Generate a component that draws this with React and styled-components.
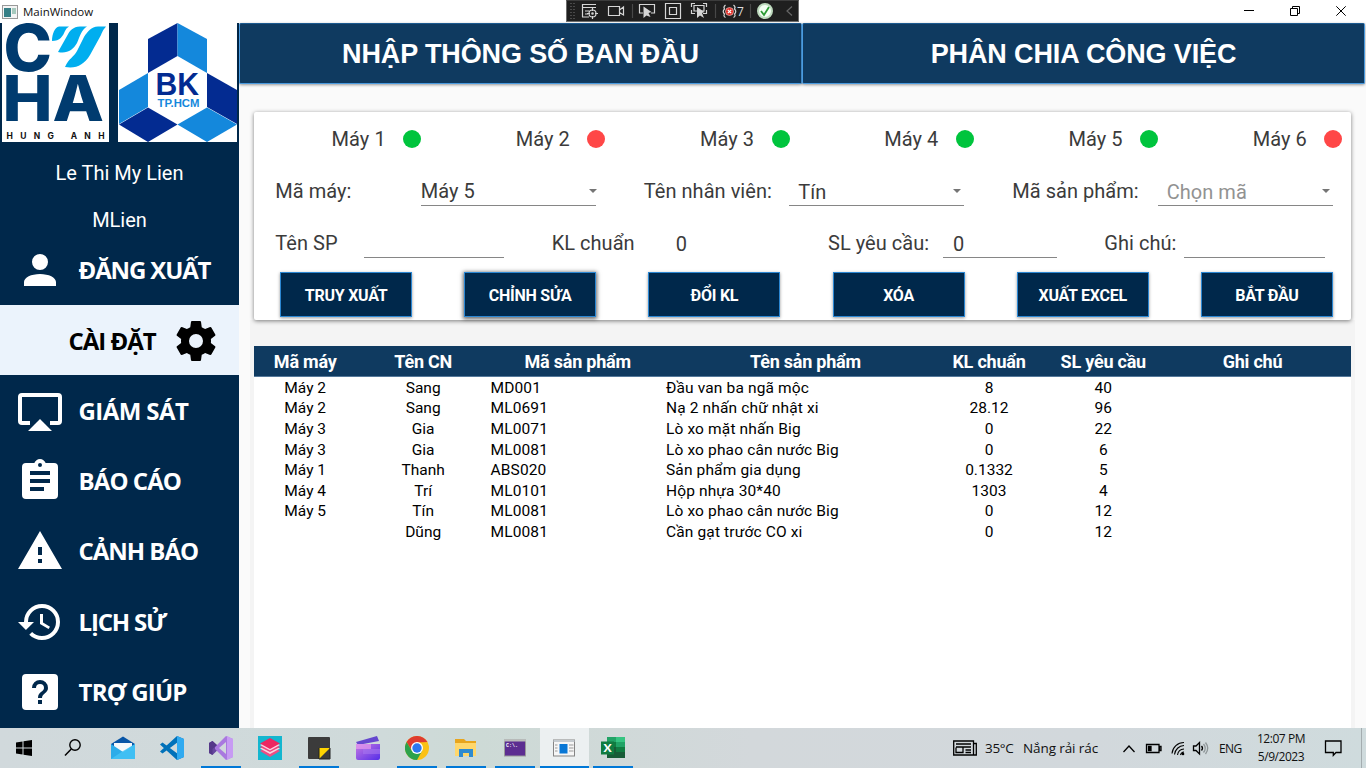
import React from "react";
import styled, { createGlobalStyle } from "styled-components";

const Global = createGlobalStyle`
  * { box-sizing: border-box; }
  body { margin: 0; overflow: hidden; background: #fff; }
`;

const ui = '"Open Sans", "Noto Sans", sans-serif';

const Screen = styled.div`
  width: 1366px;
  height: 768px;
  display: flex;
  flex-direction: column;
  font-family: Roboto, sans-serif;
  overflow: hidden;
  position: relative;
`;

/* ---------- title bar ---------- */
const TitleBar = styled.header`
  height: 23px;
  flex: none;
  display: flex;
  align-items: center;
  padding: 0 2px;
  background: #fff;
`;
const WindowTitle = styled.span`
  font: 11.5px/22px ${ui};
  color: #111;
  margin-left: 5px;
  flex: 1;
`;
const WindowControls = styled.div`
  display: flex;
  height: 20px;
  align-items: center;
  margin-bottom: 2px;
`;
const WindowButton = styled.div`
  width: 46px;
  display: flex;
  justify-content: center;
`;
const DebugBar = styled.div`
  position: absolute;
  left: 566px;
  top: 0;
  width: 233px;
  height: 22px;
  background: #1f1f1f;
  border: 1px solid #6c6c6c;
  border-top-color: #3c3c3c;
`;

/* ---------- sidebar ---------- */
const Body = styled.div`
  flex: 1;
  min-height: 0;
  display: flex;
`;
const Sidebar = styled.aside`
  width: 239px;
  flex: none;
  background: #00284b;
  display: flex;
  flex-direction: column;
`;
const Logos = styled.div`
  height: 119px;
  padding-left: 2px;
  display: flex;
  gap: 9px;
  svg { overflow: visible; }
`;
const UserLine = styled.div`
  height: 47px;
  margin-top: ${(p) => p.$top || 0}px;
  display: flex;
  align-items: center;
  justify-content: center;
  font-size: 20px;
  color: #fff;
`;
const NavItem = styled.div`
  height: ${(p) => (p.$active ? 70 : 70.4)}px;
  flex: none;
  display: flex;
  align-items: center;
  padding-top: 1px;
  padding-left: ${(p) => (p.$active ? 68.5 : 16)}px;
  gap: ${(p) => (p.$active ? 16 : 14.6)}px;
  color: ${(p) => (p.$active ? "#000" : "#fff")};
  background: ${(p) => (p.$active ? "#ebf3fc" : "transparent")};
  svg { flex: none; }
`;
const LogoutItem = styled(NavItem)`
  height: 62px;
  padding-bottom: 9px;
`;
const NavLabel = styled.span`
  font: 700 24px/34px ${ui};
  letter-spacing: ${(p) => p.$ls}px;
  white-space: nowrap;
`;

/* ---------- main ---------- */
const Main = styled.main`
  flex: 1;
  min-width: 0;
  background: #fafafa;
  display: flex;
  flex-direction: column;
`;
const Tabs = styled.div`
  display: flex;
  height: 61px;
  flex: none;
`;
const Tab = styled.div`
  width: 563px;
  flex: none;
  height: 61px;
  background: #0f3a60;
  border: 1px solid #4a9be0;
  border-top-color: #1c5a90;
  border-radius: 2px;
  box-shadow: 0 1px 3px rgba(0, 0, 0, 0.4);
  display: flex;
  align-items: center;
  justify-content: center;
  color: #fff;
  font: 700 27px/40px "Liberation Sans", Arial, sans-serif;
  letter-spacing: -0.12px;
`;
const Panel = styled.section`
  margin: 28px 0 0 15px;
  width: 1096.5px;
  height: 208px;
  flex: none;
  padding-top: 1px;
  background: #fff;
  border-radius: 2px;
  box-shadow: 0 1px 4px rgba(0, 0, 0, 0.5);
  position: relative;
`;
const FormRow = styled.div`
  width: 1105.4px;
  height: 52px;
  display: grid;
  grid-template-columns: repeat(${(p) => p.$cols}, 1fr);
  color: #3b3b3b;
  font-size: 20px;
  letter-spacing: 0.04px;
`;
const ButtonRow = styled(FormRow)`
  width: 1105px;
`;
const Machine = styled.div`
  display: flex;
  align-items: center;
  padding-left: 77.6px;
`;
const MachineName = styled.span`
  width: 71.5px;
  white-space: nowrap;
`;
const Dot = styled.i`
  width: 18px;
  height: 18px;
  border-radius: 50%;
  background: ${(p) => (p.$on ? "#00c43d" : "#ff4747")};
`;
const Field = styled.div`
  display: flex;
  align-items: center;
  padding-left: 21.3px;
`;
const Label = styled.label`
  width: ${(p) => p.$w}px;
  flex: none;
  white-space: nowrap;
`;
const Input = styled.div`
  width: ${(p) => p.$w}px;
  height: 30px;
  flex: none;
  padding-left: ${(p) => p.$pad || 0}px;
  padding-right: 3px;
  display: flex;
  align-items: center;
  justify-content: space-between;
  line-height: 28px;
  padding-top: ${(p) => (p.$pad ? 2 : 0)}px;
  border-bottom: ${(p) => (p.$plain ? "none" : "1px solid #868686")};
  color: ${(p) => (p.$muted ? "#929292" : "#3b3b3b")};
`;
const Caret = styled.i`
  border: 4px solid transparent;
  border-top-color: #757575;
  border-bottom: 0;
  margin-right: ${(p) => (p.$up ? 0 : -4)}px;
  margin-top: ${(p) => (p.$up ? -2 : 0)}px;
`;
const ButtonCell = styled.div`
  display: flex;
  justify-content: center;
  padding-top: 3px;
`;
const Button = styled.button`
  width: 132px;
  height: 45px;
  padding: 2px 0 0;
  background: #00284b;
  border: 1px solid #2b87d3;
  box-shadow: 0 1px ${(p) => (p.$focus ? "4px 1px" : "3px")} rgba(0, 0, 0, ${(p) => (p.$focus ? 0.6 : 0.4)});
  color: #fff;
  font: 700 16px Roboto, sans-serif;
  letter-spacing: -0.25px;
`;
const TableArea = styled.section`
  flex: 1;
  margin: 0 11px 0 11px;
  padding: 26px 4px 0;
  background: #f4f4f4;
  display: flex;
`;
const Table = styled.div`
  width: 1097px;
  background: #fff;
`;
const Row = styled.div`
  display: grid;
  grid-template-columns: 102.4px 133.6px 175.5px 280px 87px 141.5px 157px;
  height: 20.6px;
  line-height: 20.6px;
  font-size: 15.5px;
  color: #000;
  text-align: center;
  white-space: nowrap;
`;
const Rows = styled.div`
  padding-top: 0.8px;
`;
const HeadRow = styled(Row)`
  height: 31px;
  line-height: 32px;
  font-size: 18px;
  font-weight: 700;
  background: #0f3a60;
  border-bottom: 1px solid #54789a;
  color: #fff;
  letter-spacing: -0.22px;
`;
const Cell = styled.span`
  text-align: ${(p) => (p.$left ? "left" : "center")};
  padding-left: ${(p) => (p.$left ? 0.5 : 0)}px;
  letter-spacing: ${(p) => (p.$left ? "0.14px" : "inherit")};
`;

/* ---------- taskbar ---------- */
const Taskbar = styled.footer`
  height: 40px;
  flex: none;
  display: flex;
  background: linear-gradient(90deg, #d1d9dc 0, #cfdada 28%, #cddad6 35%, #d3d8db 55%, #d2d8dc 80%, #cfdbdd 100%);
  color: #111;
  font-family: ${ui};
`;
const TaskButton = styled.div`
  width: ${(p) => p.$w || 49}px;
  height: 40px;
  padding-right: 1px;
  display: flex;
  align-items: center;
  justify-content: center;
  background: ${(p) => (p.$active ? "#ecf0f1" : "transparent")};
  box-shadow: ${(p) => (p.$active ? "inset 0 -2px #0078d7" : "none")};
  position: relative;
  &::after {
    content: "";
    display: ${(p) => (p.$open && !p.$active ? "block" : "none")};
    position: absolute;
    bottom: 0;
    left: 4px;
    right: 5px;
    height: 2px;
    background: #0078d7;
  }
`;
const Tray = styled.div`
  margin-left: auto;
  display: flex;
  align-items: center;
  padding-right: 4px;
`;
const TrayText = styled.span`
  font-size: ${(p) => p.$size || 12}px;
  width: ${(p) => p.$w}px;
  letter-spacing: ${(p) => p.$ls || "0"};
  white-space: nowrap;
`;
const Clock = styled.div`
  width: 62px;
  font-size: 12px;
  line-height: 18px;
  text-align: center;
  letter-spacing: -0.45px;
  white-space: nowrap;
`;
const ShowDesktop = styled.i`
  width: 1px;
  height: 40px;
  background: #a4adb0;
`;

const paths = {
  account: "M12,4A4,4 0 0,1 16,8A4,4 0 0,1 12,12A4,4 0 0,1 8,8A4,4 0 0,1 12,4M12,14C16.42,14 20,15.79 20,18V20H4V18C4,15.79 7.58,14 12,14Z",
  cog: "M12,15.5A3.5,3.5 0 0,1 8.5,12A3.5,3.5 0 0,1 12,8.5A3.5,3.5 0 0,1 15.5,12A3.5,3.5 0 0,1 12,15.5M19.43,12.97C19.47,12.65 19.5,12.33 19.5,12C19.5,11.67 19.47,11.34 19.43,11L21.54,9.37C21.73,9.22 21.78,8.95 21.66,8.73L19.66,5.27C19.54,5.05 19.27,4.96 19.05,5.05L16.56,6.05C16.04,5.66 15.5,5.32 14.87,5.07L14.5,2.42C14.46,2.18 14.25,2 14,2H10C9.75,2 9.54,2.18 9.5,2.42L9.13,5.07C8.5,5.32 7.96,5.66 7.44,6.05L4.95,5.05C4.73,4.96 4.46,5.05 4.34,5.27L2.34,8.73C2.21,8.95 2.27,9.22 2.46,9.37L4.57,11C4.53,11.34 4.5,11.67 4.5,12C4.5,12.33 4.53,12.65 4.57,12.97L2.46,14.63C2.27,14.78 2.21,15.05 2.34,15.27L4.34,18.73C4.46,18.95 4.73,19.03 4.95,18.95L7.44,17.94C7.96,18.34 8.5,18.68 9.13,18.93L9.5,21.58C9.54,21.82 9.75,22 10,22H14C14.25,22 14.46,21.82 14.5,21.58L14.87,18.93C15.5,18.67 16.04,18.34 16.56,17.94L19.05,18.95C19.27,19.03 19.54,18.95 19.66,18.73L21.66,15.27C21.78,15.05 21.73,14.78 21.54,14.63L19.43,12.97Z",
  airplay: "M6,22H18L12,16M21,3H3A2,2 0 0,0 1,5V17A2,2 0 0,0 3,19H7V17H3V5H21V17H17V19H21A2,2 0 0,0 23,17V5A2,2 0 0,0 21,3Z",
  clipboard: "M17,9H7V7H17M17,13H7V11H17M14,17H7V15H14M12,3A1,1 0 0,1 13,4A1,1 0 0,1 12,5A1,1 0 0,1 11,4A1,1 0 0,1 12,3M19,3H14.82C14.4,1.84 13.3,1 12,1C10.7,1 9.6,1.84 9.18,3H5A2,2 0 0,0 3,5V19A2,2 0 0,0 5,21H19A2,2 0 0,0 21,19V5A2,2 0 0,0 19,3Z",
  alert: "M13,14H11V10H13M13,18H11V16H13M1,21H23L12,2L1,21Z",
  history: "M13.5,8H12V13L16.28,15.54L17,14.33L13.5,12.25V8M13,3A9,9 0 0,0 4,12H1L4.96,16.03L9,12H6A7,7 0 0,1 13,5A7,7 0 0,1 20,12A7,7 0 0,1 13,19C11.07,19 9.32,18.21 8.06,16.94L6.64,18.36C8.27,20 10.5,21 13,21A9,9 0 0,0 22,12A9,9 0 0,0 13,3",
  help: "M11,18H13V16H11V18M12,6A4,4 0 0,0 8,10H10A2,2 0 0,1 12,8A2,2 0 0,1 14,10C14,12 11,11.75 11,15H13C13,12.75 16,12.5 16,10A4,4 0 0,0 12,6M5,3H19A2,2 0 0,1 21,5V19A2,2 0 0,1 19,21H5A2,2 0 0,1 3,19V5A2,2 0 0,1 5,3Z",
};
const NavIcon = ({ name }) => (
  <svg width="48" height="48" viewBox="0 0 24 24" fill="currentColor"><path d={paths[name]} /></svg>
);

const CyhaLogo = () => (
  <svg width="107" height="119" viewBox="2 23 107 119">
    <rect x="2" y="23" width="107" height="119" fill="#fff" />
    <g fill="#003b6f" fontFamily="Inter, sans-serif" fontWeight="800">
      <text x="3.500" y="71.200" fontSize="64" textLength="48.500" lengthAdjust="spacingAndGlyphs">C</text>
      <text x="2.500" y="121.300" fontSize="63" textLength="101.500" lengthAdjust="spacingAndGlyphs">HA</text>
    </g>
    <g fill="#00aeef">
      <path d="M69 26.500H59C55 27 52 34 52 41C60 41 63 36 65 31Q66 28 69 26.500Z" />
      <path d="M87 26.500H80C73 27 70 30 67 36L58 52C67 54 73 50 77 43C80 36 82 29 87 26.500Z" />
      <path d="M106 26.500H98C91 27 88 31 84 37L77 51C74 57 69 58 65 67C76 69 84 65 90 55L101 35C103 30 104 29 106 26.500Z" />
    </g>
    <text x="6.500" y="138.800" fontSize="8.500" fontFamily="Inter, sans-serif" fontWeight="700" fill="#111" textLength="98">HUNG ANH</text>
  </svg>
);
const BkLogo = () => (
  <svg width="119" height="119" viewBox="118 23 119 119">
    <rect x="118" y="23" width="119" height="119" fill="#fff" />
    <g fill="#032b91">
      <path d="M148 39L177.500 23V56L148 73Z" />
      <path d="M207 73L237 90V124L207 107Z" />
      <path d="M119 124.500L148 107.500L177.500 124.500L148 142Z" />
    </g>
    <g fill="#1488dc">
      <path d="M177.500 23L207 39V73L177.500 56Z" />
      <path d="M148 73L119 90V124L148 107Z" />
      <path d="M177.500 124.500L207 107.500L237 124.500L207 142Z" />
    </g>
    <text x="155.500" y="95" fontSize="31" fontFamily="Liberation Sans, sans-serif" fontWeight="700" fill="#032b91" textLength="43.500" lengthAdjust="spacingAndGlyphs">BK</text>
    <text x="157.500" y="107" fontSize="11.500" fontFamily="Liberation Sans, sans-serif" fontWeight="700" fill="#1488dc" textLength="42" lengthAdjust="spacingAndGlyphs">TP.HCM</text>
  </svg>
);

const DebugIcons = () => (
  <svg width="231" height="20" viewBox="567 1 231 20" fill="none" stroke="#d6d6d6" strokeWidth="1.200">
    <path d="M571 3V20M574 3V20" stroke="#666" strokeDasharray="1 2" />
    <path d="M582.500 17V4.500H596M582 7.500H596M585 11H589M585 14H588M582 17H589" />
    <circle cx="592.500" cy="13.500" r="3.500" /><path d="M592.500 8V11M592.500 16V19M587 13.500H590M595 13.500H598" /><circle cx="592.500" cy="13.500" r=".7" />
    <path d="M608.500 6.500H619.500V15.500H608.500ZM619.500 10L623.500 7V15L619.500 12.500" />
    <path d="M632.500 4V18M715.500 4V18M750.500 4V18" stroke="#484848" />
    <path d="M643 13H639.500V4.500H654.500V13H651" />
    <path d="M643.500 6.500V18L646.500 15.500L650.500 17L648.500 13L651.500 12Z" fill="#d6d6d6" stroke="none" />
    <path d="M665.500 3.500H680.500V18.500H665.500ZM669.500 7.500H676.500V14.500H669.500Z" />
    <path d="M691.500 7V3.500H695M703 3.500H706.500V7M706.500 10V13.500H703M695 13.500H691.500V10M694 5.500H704V11H694Z" />
    <path d="M697 7V18L700 15.500L704 18L702 13L704.500 12Z" fill="#d6d6d6" stroke="none" />
    <circle cx="729.500" cy="11.500" r="4" fill="#e12d26" stroke="#fff" strokeWidth=".5" />
    <path d="M727.800 9.800L731.200 13.200M731.200 9.800L727.800 13.200" stroke="#fff" />
    <path d="M725.500 5Q723 7 724.500 9Q722 11.500 724.500 14Q723 16 725.500 17.500M733.500 5Q736 7 734.500 9Q737 11.500 734.500 14Q736 16 733.500 17.500" />
    <text x="737" y="16" fontSize="12" fontFamily="Open Sans" fill="#ddd" stroke="none">7</text>
    <circle cx="765" cy="11" r="7" fill="#f3fff3" stroke="#bdd9bd" strokeWidth="2" />
    <path d="M761 11L764 15L769 7" stroke="#2c9c35" strokeWidth="1.800" />
    <path d="M792 6.500L787 11L792 15.500" stroke="#666" />
  </svg>
);

const S = ({ children, size = 24 }) => <svg width={size} height={size} viewBox="0 0 24 24">{children}</svg>;
const taskApps = [
  { w: 49, icon: <S><path d="M4 6.400L10.500 5.500V11.500H4ZM11.500 5.300L20 4V11.500H11.500ZM4 12.500H10.500V18.500L4 17.600ZM11.500 12.500H20V20L11.500 18.700Z" fill="#000" /></S> },
  { w: 50, icon: <S><circle cx="13" cy="9" r="5.200" fill="none" stroke="#000" strokeWidth="1.400" /><path d="M9.300 13L3 19.500" stroke="#000" strokeWidth="1.500" /></S> },
  { icon: <S><path d="M0 8L12 0.500L24 8V12H0Z" fill="#0855a6" /><path d="M3 7H21V16H3Z" fill="#f5f8fa" /><path d="M0 8L12 16L24 8V23H0Z" fill="#2cace9" /><path d="M0 23L12 15L24 8V23Z" fill="#46c4f5" opacity=".8" /></S> },
  { icon: <S><path d="M17 0L24 3V21L17 24L0 8.500L2.500 6.500L18 18V6L2.500 17.500L0 15.500Z" fill="#0071b9" /><path d="M17 0L24 3V21L17 24Z" fill="#30aaf0" /></S> },
  { open: true, icon: <S><path d="M0 7L3.500 5L17 18V6L3.500 19L0 17Z" fill="#67479f" /><path d="M17 0L24 3V21L17 24L6 13V11Z" fill="#a978df" /><path d="M17 6V18L10 12Z" fill="#d1d7dc" /><path d="M0 7L3.500 5L8 9L3.500 13V19L0 17Z" fill="#553889" /><path d="M18 0L24 3V21L18 24Z" fill="#c79bf3" /></S> },
  { icon: <S><rect width="24" height="24" fill="#14b6cf" /><path d="M2 15L12 10L22 15L12 21Z" fill="#f04e83" /><path d="M2 12.500L12 8L22 12.500L12 18Z" fill="#fbd3e0" /><path d="M2 11L12 6L22 11L12 16Z" fill="#f0447c" /><path d="M2 9L12 4L22 9L12 14.500Z" fill="#fbd3e0" /><path d="M2 7.500L12 2L22 7.500L12 13Z" fill="#ed2861" /></S> },
  { open: true, icon: <S><rect x="1" y="1" width="22" height="22" rx="1" fill="#3b3b3b" /><path d="M12 12H23L12 23Z" fill="#ffd500" /><path d="M12 12V23H23V12" fill="none" stroke="#222" /></S> },
  { icon: <S><defs><linearGradient id="clip" x2="1" y2="1"><stop stopColor="#c779e3" /><stop offset="1" stopColor="#542de8" /></linearGradient></defs><path d="M0 6L21 0L23 5L2 9Z" fill="#6547cf" /><path d="M0 8H24V22Q24 24 22 24H2Q0 24 0 22Z" fill="url(#clip)" /><path d="M0 8H15V13H0Z" fill="#e69bee" opacity=".7" /><path d="M7 13H24V18H7Z" fill="#a574ef" opacity=".6" /></S> },
  { open: true, icon: <S><circle cx="12" cy="12" r="12" fill="#fbc116" /><path d="M1.600 6A12 12 0 0 1 22.400 6L12 6.500L7 15Z" fill="#df3c30" /><path d="M1.600 6A12 12 0 0 0 12 24L17 15L7 15Z" fill="#2da24c" /><circle cx="12" cy="12" r="6" fill="#fff" /><circle cx="12" cy="12" r="4.700" fill="#2d77ef" /></S> },
  { open: true, icon: <S><path d="M1 3H10L12 5H22V20H1Z" fill="#e8a51d" /><path d="M1 7H22V20H1Z" fill="#ffd76b" /><path d="M5 13H19V21H15V17H9V21H5Z" fill="#2f8bd0" /></S> },
  { open: true, icon: <S><rect x="1.500" y="4" width="21" height="16" fill="#5c2d91" stroke="#999" /><path d="M1 4.500H23" stroke="#bbb" strokeWidth="2" /><text x="3" y="10.500" fontSize="5" fontFamily="Liberation Mono" fontWeight="700" fill="#fff">C:\.</text></S> },
  { open: true, active: true, icon: <S><rect x="1.500" y="4" width="21" height="16" fill="#f6f6f6" stroke="#858585" /><path d="M1.500 5H22.500" stroke="#c5cbd0" strokeWidth="2" /><rect x="7.500" y="8" width="8" height="9.500" fill="#0877d6" /><path d="M3 9H5.500M3 12H5.500M3 15H5.500M17 9H21.500M17 12H21.500M17 15H21.500" stroke="#999" /></S> },
  { open: true, icon: <S><path d="M6 1H24V22H6Z" fill="#21a366" /><path d="M15 1H24V6H15Z" fill="#35c481" /><path d="M6 6H15V11H6Z" fill="#107c41" /><path d="M15 11H24V16H15Z" fill="#107c41" /><path d="M6 11H15V22H6ZM15 16H24V22H15Z" fill="#185c37" /><rect y="5.500" width="13" height="13" fill="#107c41" /><text x="2.400" y="16.300" fontSize="12" fontFamily="Lato" fontWeight="900" fill="#fff">X</text></S> },
];

const nav = [
  ["airplay", "GIÁM SÁT", -0.6],
  ["clipboard", "BÁO CÁO", -0.95],
  ["alert", "CẢNH BÁO", -1.05],
  ["history", "LỊCH SỬ", -1.2],
  ["help", "TRỢ GIÚP", -0.8],
];
const machines = [true, false, true, true, true, false];
const buttons = ["TRUY XUẤT", "CHỈNH SỬA", "ĐỔI KL", "XÓA", "XUẤT EXCEL", "BẮT ĐẦU"];
const headers = ["Mã máy", "Tên CN", "Mã sản phẩm", "Tên sản phẩm", "KL chuẩn", "SL yêu cầu", "Ghi chú"];
const rows = [
  ["Máy 2", "Sang", "MD001", "Đầu van ba ngã mộc", "8", "40", ""],
  ["Máy 2", "Sang", "ML0691", "Nạ 2 nhấn chữ nhật xi", "28.12", "96", ""],
  ["Máy 3", "Gia", "ML0071", "Lò xo mặt nhấn Big", "0", "22", ""],
  ["Máy 3", "Gia", "ML0081", "Lò xo phao cân nước Big", "0", "6", ""],
  ["Máy 1", "Thanh", "ABS020", "Sản phẩm gia dụng", "0.1332", "5", ""],
  ["Máy 4", "Trí", "ML0101", "Hộp nhựa 30*40", "1303", "4", ""],
  ["Máy 5", "Tín", "ML0081", "Lò xo phao cân nước Big", "0", "12", ""],
  ["", "Dũng", "ML0081", "Cần gạt trước CO xi", "0", "12", ""],
];

export default function App() {
  return (
    <Screen>
      <Global />
      <TitleBar>
        <svg width="16" height="14" viewBox="0 0 16 14">
          <rect x=".5" y=".5" width="15" height="13" fill="#f4f4f4" stroke="#999" />
          <rect x="2" y="3" width="7" height="9" fill="#367f86" /><rect x="10" y="3" width="4" height="6" fill="#a6c9bd" />
        </svg>
        <WindowTitle>MainWindow</WindowTitle>
        <WindowControls>
          <WindowButton><svg width="10" height="10"><path d="M0 4.500H10" stroke="#000" /></svg></WindowButton>
          <WindowButton><svg width="10" height="10" fill="none" stroke="#000"><path d="M.5 2.500H7.500V9.500H.5ZM2.500 2.500V.5H9.500V7.500H7.500" /></svg></WindowButton>
          <WindowButton><svg width="10" height="10" stroke="#000"><path d="M.3 .3L9.700 9.700M9.700 .3L.3 9.700" /></svg></WindowButton>
        </WindowControls>
        <DebugBar><DebugIcons /></DebugBar>
      </TitleBar>
      <Body>
        <Sidebar>
          <Logos><CyhaLogo /><BkLogo /></Logos>
          <UserLine $top={7}>Le Thi My Lien</UserLine>
          <UserLine>MLien</UserLine>
          <LogoutItem><NavIcon name="account" /><NavLabel $ls={-1.15}>ĐĂNG XUẤT</NavLabel></LogoutItem>
          <NavItem $active><NavLabel $ls={-1}>CÀI ĐẶT</NavLabel><NavIcon name="cog" /></NavItem>
          {nav.map(([icon, text, ls]) => (
            <NavItem key={text}><NavIcon name={icon} /><NavLabel $ls={ls}>{text}</NavLabel></NavItem>
          ))}
        </Sidebar>
        <Main>
          <Tabs><Tab>NHẬP THÔNG SỐ BAN ĐẦU</Tab><Tab>PHÂN CHIA CÔNG VIỆC</Tab></Tabs>
          <Panel>
            <FormRow $cols={6}>
              {machines.map((on, i) => (
                <Machine key={i}><MachineName>Máy {i + 1}</MachineName><Dot $on={on} /></Machine>
              ))}
            </FormRow>
            <FormRow $cols={3}>
              <Field><Label $w={145.5}>Mã máy:</Label><Input $w={175}>Máy 5<Caret /></Input></Field>
              <Field><Label $w={145.5}>Tên nhân viên:</Label><Input $w={175} $pad={9}>Tín<Caret $up /></Input></Field>
              <Field><Label $w={145.5}>Mã sản phẩm:</Label><Input $w={175} $pad={9} $muted>Chọn mã<Caret $up /></Input></Field>
            </FormRow>
            <FormRow $cols={4}>
              <Field><Label $w={88.5}>Tên SP</Label><Input $w={140} /></Field>
              <Field><Label $w={115}>KL chuẩn</Label><Input $w={100} $pad={9} $plain>0</Input></Field>
              <Field><Label $w={115}>SL yêu cầu:</Label><Input $w={114} $pad={10}>0</Input></Field>
              <Field><Label $w={80}>Ghi chú:</Label><Input $w={141} /></Field>
            </FormRow>
            <ButtonRow $cols={6}>
              {buttons.map((b, i) => <ButtonCell key={b}><Button $focus={i === 1}>{b}</Button></ButtonCell>)}
            </ButtonRow>
          </Panel>
          <TableArea>
            <Table>
              <HeadRow>{headers.map((h) => <Cell key={h}>{h}</Cell>)}</HeadRow>
              <Rows>
                {rows.map((r, i) => (
                  <Row key={i}>{r.map((c, j) => <Cell key={j} $left={j === 2 || j === 3}>{c}</Cell>)}</Row>
                ))}
              </Rows>
            </Table>
          </TableArea>
        </Main>
      </Body>
      <Taskbar>
        {taskApps.map((a, i) => (
          <TaskButton key={i} $w={a.w} $open={a.open} $active={a.active}>{a.icon}</TaskButton>
        ))}
        <Tray>
          <svg width="32" height="18" viewBox="0 0 32 18" fill="none" stroke="#000" strokeWidth="1.300">
            <path d="M.7 2H20.500V16H.7ZM20.500 4.500H23.300V16H20.500M3 5H18M3 8H18M3 8.500V13.500H10V8.500M12.500 11H18M12.500 13.500H18" />
          </svg>
          <TrayText $w={38} $size={13.5} $ls="-0.3px">35°C</TrayText>
          <TrayText $w={100} $size={13.5} $ls="-0.1px">Nắng rải rác</TrayText>
          <svg width="96" height="20" viewBox="1123 738 96 20" fill="none" stroke="#000" strokeWidth="1.300">
            <path d="M1123.500 752L1129 746L1134.500 752" />
            <path d="M1146.500 744.500H1159V752.500H1146.500ZM1159.500 746.500H1161V750.500H1159.500Z" /><path d="M1148.500 746.500H1151V750.500H1148.500Z" fill="#000" />
            <path d="M1172 753.500A12 12 0 0 1 1184 742.500M1174.500 754.500A10 10 0 0 1 1184 745.500M1177.500 755A7 7 0 0 1 1184 749M1180.500 755A4 4 0 0 1 1184 752" strokeWidth="1.100" /><circle cx="1183" cy="754" r="1.300" fill="#000" stroke="none" />
            <path d="M1193.500 746H1196L1199.500 742.500V754L1196 750.500H1193.500Z" />
            <path d="M1201.500 746Q1203.500 748.300 1201.500 750.500" /><path d="M1203.500 744Q1207 748.300 1203.500 752.500M1205.500 742.500Q1210 748.300 1205.500 754" stroke="#8f9698" />
          </svg>
          <TrayText $w={31} $size={12} $ls="-0.6px">ENG</TrayText>
          <Clock>12:07 PM<br />5/9/2023</Clock>
          <svg width="49" height="20" viewBox="0 0 49 20" fill="none" stroke="#000" strokeWidth="1.300">
            <path d="M13.500 3H29V14.500H24L21.300 17.300V14.500H13.500Z" />
          </svg>
          <ShowDesktop />
        </Tray>
      </Taskbar>
    </Screen>
  );
}
